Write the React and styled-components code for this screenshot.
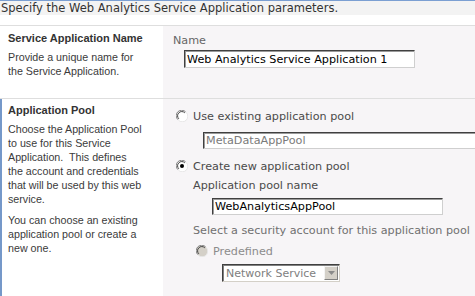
import React from "react";
import styled, { createGlobalStyle } from "styled-components";

const GlobalStyle = createGlobalStyle`
  html, body {
    margin: 0;
    padding: 0;
    background: #ffffff;
  }
  body {
    width: 475px;
    height: 296px;
    overflow: hidden;
  }
`;

const Page = styled.div`
  width: 475px;
  height: 296px;
  overflow: hidden;
  background: #fff;
  border-top: 1px solid #7b9fd2;
  box-sizing: border-box;
`;

const Header = styled.div`
  height: 14px;
  line-height: 14px;
  background: #f3f3f3;
  color: #333;
  font-family: "DejaVu Sans", Verdana, sans-serif;
  font-size: 11.5px;
  padding-left: 1px;
  white-space: nowrap;
`;

const Spacer = styled.div`
  height: 10px;
`;

const Section = styled.div`
  display: grid;
  grid-template-columns: 163px 1fr;
  border-top: 1px solid #dedede;
  height: ${(p) => p.$height}px;
`;

const LeftCell = styled.div`
  padding: ${(p) => p.$top}px 6px 0 ${(p) => (p.$accent ? 6 : 8)}px;
  border-left: ${(p) => (p.$accent ? "2px solid #7598c9" : "none")};
  font-family: "Liberation Sans", Tahoma, sans-serif;
  font-size: 10.7px;
  color: #3b3b3b;
  white-space: nowrap;
`;

const Title = styled.div`
  font-weight: bold;
  font-size: 11px;
  color: #333;
  line-height: 14px;
  margin-bottom: 5px;
`;

const Desc = styled.div`
  line-height: 14px;
  & + & {
    margin-top: 7px;
  }
`;

const RightCell = styled.div`
  background: #f7f5f7;
  padding: ${(p) => p.$top}px 0 0 10px;
  display: flex;
  flex-direction: column;
  align-items: flex-start;
  font-family: "DejaVu Sans", Verdana, sans-serif;
  font-size: 11.2px;
  color: #4a4a4a;
  white-space: nowrap;
  overflow: hidden;
`;

const Label = styled.div`
  line-height: 14px;
  margin-left: ${(p) => p.$indent || 0}px;
  margin-top: ${(p) => p.$mt || 0}px;
  color: ${(p) => p.$color || "#4a4a4a"};
`;

const RadioRow = styled.label`
  display: flex;
  align-items: center;
  gap: 5px;
  height: 14px;
  margin-left: ${(p) => p.$indent || 0}px;
  margin-top: ${(p) => p.$mt || 0}px;
  color: ${(p) => (p.$disabled ? "#8c8c8c" : "#4a4a4a")};
`;

const TextBox = styled.input`
  box-sizing: border-box;
  width: ${(p) => p.$width}px;
  height: ${(p) => p.$height || 17}px;
  margin: ${(p) => p.$mt || 0}px 0 0 ${(p) => p.$indent || 0}px;
  padding: 0 2px;
  border: 1px solid;
  border-color: #404040 #cfcfcf #cfcfcf #404040;
  box-shadow: inset 1px 1px 0 #9a9a9a;
  background: #fff;
  font-family: "DejaVu Sans", Verdana, sans-serif;
  font-size: 11.2px;
  color: ${(p) => (p.disabled ? "#7a7a7a" : "#000")};
  outline: none;
  flex-shrink: 0;
`;

const SelectBox = styled.div`
  box-sizing: border-box;
  display: flex;
  align-items: center;
  width: ${(p) => p.$width}px;
  height: 18px;
  margin: ${(p) => p.$mt || 0}px 0 0 ${(p) => p.$indent || 0}px;
  border: 1px solid;
  border-color: #404040 #d4d0c8 #d4d0c8 #404040;
  box-shadow: inset 1px 1px 0 #808080;
  background: #fff;
  color: #808080;
  font-size: 11px;
  padding: 1px 1px 1px 3px;
`;

const SelectText = styled.span`
  flex: 1;
`;

const DropButton = styled.span`
  box-sizing: border-box;
  width: 14px;
  height: 14px;
  background: #d4d0c8;
  border: 1px solid;
  border-color: #f4f4f4 #808080 #808080 #f4f4f4;
  display: flex;
  align-items: center;
  justify-content: center;
`;

const Radio = ({ checked, disabled }) => (
  <svg width="12" height="12" viewBox="0 0 12 12">
    <circle cx="6" cy="6" r="5.5" fill={disabled ? "#d4d0c8" : "#fff"} />
    <path d="M1.8 9.6 A5 5 0 0 1 9.6 1.8" fill="none" stroke="#808080" strokeWidth="1" />
    <path d="M2.8 8.8 A4 4 0 0 1 8.8 2.8" fill="none" stroke="#404040" strokeWidth="1" />
    <path d="M10.2 2.4 A5 5 0 0 1 2.4 10.2" fill="none" stroke="#e6e6e6" strokeWidth="1" />
    {checked && <circle cx="6" cy="6" r="2" fill="#000" />}
  </svg>
);

const Arrow = () => (
  <svg width="7" height="4" viewBox="0 0 7 4">
    <path d="M0 0 H7 L3.5 4 Z" fill="#8a8a8a" />
  </svg>
);

export default function App() {
  return (
    <>
      <GlobalStyle />
      <Page>
        <Header>Specify the Web Analytics Service Application parameters.</Header>
        <Spacer />
        <Section $height={72}>
          <LeftCell $top={5}>
            <Title>Service Application Name</Title>
            <Desc>
              Provide a unique name for
              <br />
              the Service Application.
            </Desc>
          </LeftCell>
          <RightCell $top={8}>
            <Label $color="#666">Name</Label>
            <TextBox
              readOnly
              value="Web Analytics Service Application 1"
              $width={231}
              $height={18}
              $indent={11}
              $mt={2}
            />
          </RightCell>
        </Section>
        <Section $height={200}>
          <LeftCell $top={4} $accent>
            <Title>Application Pool</Title>
            <Desc>
              Choose the Application Pool
              <br />
              to use for this Service
              <br />
              Application.&nbsp; This defines
              <br />
              the account and credentials
              <br />
              that will be used by this web
              <br />
              service.
            </Desc>
            <Desc>
              You can choose an existing
              <br />
              application pool or create a
              <br />
              new one.
            </Desc>
          </LeftCell>
          <RightCell $top={10}>
            <RadioRow $indent={3}>
              <Radio />
              Use existing application pool
            </RadioRow>
            <TextBox readOnly disabled value="MetaDataAppPool" $width={300} $indent={30} $mt={9} />
            <RadioRow $indent={3} $mt={10}>
              <Radio checked />
              Create new application pool
            </RadioRow>
            <Label $indent={20} $mt={6}>Application pool name</Label>
            <TextBox readOnly value="WebAnalyticsAppPool" $width={231} $indent={39} $mt={5} />
            <Label $indent={20} $mt={9} $color="#707070">
              Select a security account for this application pool
            </Label>
            <RadioRow $indent={23} $mt={6} $disabled>
              <Radio disabled />
              Predefined
            </RadioRow>
            <SelectBox $width={118} $indent={49} $mt={6}>
              <SelectText>Network Service</SelectText>
              <DropButton>
                <Arrow />
              </DropButton>
            </SelectBox>
          </RightCell>
        </Section>
      </Page>
    </>
  );
}
